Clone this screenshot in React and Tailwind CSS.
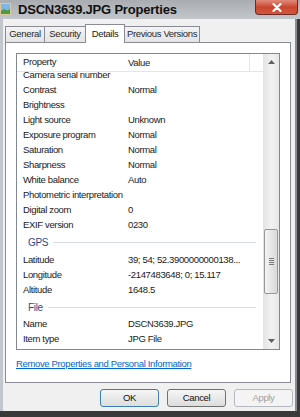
import React from 'react';

const font = { fontFamily: '"Liberation Sans", Arial, sans-serif' };

const items = [
  { name: 'Camera serial number', value: '' },
  { name: 'Contrast', value: 'Normal' },
  { name: 'Brightness', value: '' },
  { name: 'Light source', value: 'Unknown' },
  { name: 'Exposure program', value: 'Normal' },
  { name: 'Saturation', value: 'Normal' },
  { name: 'Sharpness', value: 'Normal' },
  { name: 'White balance', value: 'Auto' },
  { name: 'Photometric interpretation', value: '' },
  { name: 'Digital zoom', value: '0' },
  { name: 'EXIF version', value: '0230' },
  { group: 'GPS' },
  { name: 'Latitude', value: '39; 54; 52.3900000000138...' },
  { name: 'Longitude', value: '-2147483648; 0; 15.117' },
  { name: 'Altitude', value: '1648.5' },
  { group: 'File' },
  { name: 'Name', value: 'DSCN3639.JPG' },
  { name: 'Item type', value: 'JPG File' },
];

function TitleBar() {
  return (
    <div className="flex h-[19px] items-start bg-gradient-to-b from-[#a9adb2] to-[#c3c6ca]">
      <svg width="11" height="12" viewBox="0 0 11 12" className="mt-[3px]">
        <rect x="0" y="0" width="11" height="12" fill="#d9c9a3" />
        <rect x="1" y="1" width="9" height="10" fill="#7fb6e6" />
        <path d="M1 8 L4 6 L7 7.5 L10 6 L10 11 L1 11 Z" fill="#4f9a3c" />
      </svg>
      <div className="ml-[7px] mt-[1px] text-[13px] font-bold leading-[17px] tracking-[-0.2px] text-[#111]">
        DSCN3639.JPG Properties
      </div>
      <div className="ml-auto mr-[2px] flex h-[15px] w-[43px] items-center justify-center rounded-b-[4px] border border-t-0 border-[#6b2a24] bg-gradient-to-b from-[#e08a7c] via-[#c9452f] to-[#d3553c]">
        <svg width="10" height="9" viewBox="0 0 10 9">
          <path d="M1.5 1 L8.5 8 M8.5 1 L1.5 8" stroke="#fff" strokeWidth="2.2" strokeLinecap="round" />
        </svg>
      </div>
    </div>
  );
}

function Tabs() {
  const tabs = [
    { label: 'General', w: 'w-[40px]' },
    { label: 'Security', w: 'w-[42px]' },
    { label: 'Details', w: 'w-[40px]', active: true },
    { label: 'Previous Versions', w: 'w-[76px]' },
  ];
  return (
    <div className="relative z-10 flex h-[18px] items-end pl-[2px]">
      {tabs.map((t) =>
        t.active ? (
          <div
            key={t.label}
            className={`${t.w} -ml-px mb-[-1px] flex h-[19px] items-center justify-center border border-b-0 border-[#898c95] bg-white text-[#1a1a1a]`}
          >
            {t.label}
          </div>
        ) : (
          <div
            key={t.label}
            className={`${t.w} -ml-px flex h-[16px] items-center justify-center border border-b-0 border-[#898c95] bg-gradient-to-b from-[#f4f4f4] to-[#e4e4e4] text-[#2a2a2a] first:ml-0`}
          >
            {t.label}
          </div>
        )
      )}
    </div>
  );
}

function Scrollbar() {
  return (
    <div className="flex w-[16px] flex-col bg-gradient-to-r from-[#e3e3e3] via-[#f2f2f2] to-[#e6e6e6]">
      <div className="flex h-[16px] items-center justify-center">
        <svg width="7" height="4" viewBox="0 0 7 4">
          <path d="M0 4 L3.5 0 L7 4 Z" fill="#606060" />
        </svg>
      </div>
      <div className="h-[159px]" />
      <div className="mx-px flex h-[65px] flex-col items-center justify-center gap-[1px] rounded-[2px] border border-[#979797] bg-gradient-to-r from-[#f3f3f3] to-[#d9d9d9]">
        <div className="h-px w-[5px] bg-[#7a7a7a]" />
        <div className="h-px w-[5px] bg-[#7a7a7a]" />
        <div className="h-px w-[5px] bg-[#7a7a7a]" />
        <div className="h-px w-[5px] bg-[#7a7a7a]" />
      </div>
      <div className="flex-1" />
      <div className="flex h-[16px] items-center justify-center">
        <svg width="7" height="4" viewBox="0 0 7 4">
          <path d="M0 0 L3.5 4 L7 0 Z" fill="#606060" />
        </svg>
      </div>
    </div>
  );
}

function ListView() {
  return (
    <div className="flex h-[297px] w-[264px] border border-[#828790] bg-white">
      <div className="flex min-w-0 flex-1 flex-col">
        <div className="relative z-10 flex h-[18px] shrink-0 items-center border-b border-[#e3e5e8] bg-white text-[#1a1a1a]">
          <div className="w-[105px] pl-[6px]">Property</div>
          <div className="h-full w-[128px] border-r border-[#e3e5e8] pl-[6px] leading-[17px]">Value</div>
        </div>
        <div className="flex-1 overflow-hidden">
          <div className="mt-[-4px] flex flex-col">
            {items.map((it, i) =>
              it.group ? (
                <div key={i} className="flex h-[19.5px] items-center pl-[11px]">
                  <span className="text-[10px] text-[#2a4b9a]">{it.group}</span>
                  <div className="ml-[5px] mr-[7px] h-px flex-1 bg-[#d7dbe3]" />
                </div>
              ) : (
                <div key={i} className="flex h-[15px] items-center text-[#1a1a1a]">
                  <div className="w-[105px] shrink-0 whitespace-nowrap pl-[6px]">{it.name}</div>
                  <div className="whitespace-nowrap pl-[6px]">{it.value}</div>
                </div>
              )
            )}
          </div>
        </div>
      </div>
      <Scrollbar />
    </div>
  );
}

function Button({ children, focused, disabled }) {
  const border = focused ? 'border-[#3c7fb1]' : disabled ? 'border-[#b5b9bd]' : 'border-[#707070]';
  const text = disabled ? 'text-[#a0a0a0]' : 'text-[#111]';
  const bg = disabled ? 'from-[#f4f4f4] to-[#f4f4f4]' : 'from-[#f6f6f6] to-[#dddddd]';
  return (
    <div className={`flex h-[18px] w-[59px] items-center justify-center rounded-[3px] border ${border} bg-gradient-to-b ${bg} ${text}`}>
      {children}
    </div>
  );
}

export default function App() {
  return (
    <div className="flex h-[417px] w-[300px] flex-col overflow-hidden bg-[#3a3a3a] text-[9.5px] tracking-[-0.35px]" style={font}>
      <TitleBar />
      <div className="flex h-[392px]">
        <div className="w-[3px] bg-[#c3c6ca]" />
        <div className="flex w-[292px] flex-col bg-[#f0f0f0] pt-[5px]">
          <Tabs />
          <div className="ml-[2px] flex h-[341px] w-[286px] flex-col border border-[#898c95] bg-white pl-[10px] pt-[10px]">
            <ListView />
            <div className="mt-[7px] text-[#0066cc] underline">Remove Properties and Personal Information</div>
          </div>
          <div className="mr-[2px] mt-[6px] flex justify-end gap-[8px]">
            <Button focused>OK</Button>
            <Button>Cancel</Button>
            <Button disabled>Apply</Button>
          </div>
        </div>
        <div className="w-[2px] bg-[#8a8d91]" />
      </div>
    </div>
  );
}
